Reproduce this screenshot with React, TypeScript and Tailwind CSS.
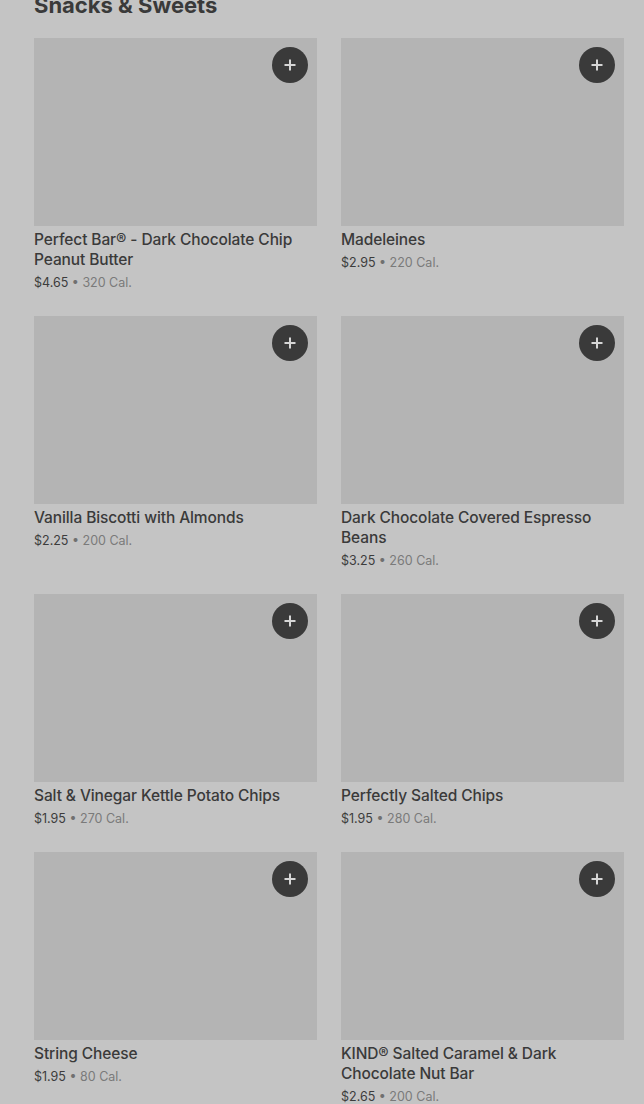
import React from "react";

type Item = { name: string; price: string; cal: string };

const items: Item[] = [
  { name: "Perfect Bar® - Dark Chocolate Chip Peanut Butter", price: "$4.65", cal: "320 Cal." },
  { name: "Madeleines", price: "$2.95", cal: "220 Cal." },
  { name: "Vanilla Biscotti with Almonds", price: "$2.25", cal: "200 Cal." },
  { name: "Dark Chocolate Covered Espresso Beans", price: "$3.25", cal: "260 Cal." },
  { name: "Salt & Vinegar Kettle Potato Chips", price: "$1.95", cal: "270 Cal." },
  { name: "Perfectly Salted Chips", price: "$1.95", cal: "280 Cal." },
  { name: "String Cheese", price: "$1.95", cal: "80 Cal." },
  { name: "KIND® Salted Caramel & Dark Chocolate Nut Bar", price: "$2.65", cal: "200 Cal." },
];

function Card({ item }: { item: Item }) {
  return (
    <div className="flex flex-col">
      <div className="relative h-[188px] bg-[#b4b4b4]">
        <button className="absolute right-[9px] top-[9px] flex h-[36px] w-[36px] items-center justify-center rounded-full bg-[#3a3a3a]">
          <svg width="14" height="14" viewBox="0 0 14 14">
            <path d="M7 1.5v11M1.5 7h11" stroke="#d6d6d6" strokeWidth="2" />
          </svg>
        </button>
      </div>
      <div className="mt-[4px] text-[15.5px] font-medium leading-[20px] tracking-[-0.1px] text-[#3a3a3a]">{item.name}</div>
      <div className="mt-[3px] text-[12.5px] leading-[20px]">
        <span className="text-[#3c3c3c]">{item.price}</span>
        <span className="text-[#707070]"> • </span>
        <span className="text-[#7a7a7a]">{item.cal}</span>
      </div>
    </div>
  );
}

export default function App() {
  return (
    <div
      className="h-[1104px] w-[644px] overflow-hidden bg-[#c4c4c4] pl-[34px] pr-[20px]"
      style={{ fontFamily: "Inter, 'Liberation Sans', sans-serif" }}
    >
      <h2 className="-mt-[9px] text-[22px] font-bold leading-[28px] text-[#3a3a3a]">Snacks &amp; Sweets</h2>
      <div className="mt-[19px] grid grid-cols-2 gap-x-[24px] gap-y-[23px]">
        {items.map((it) => (
          <Card key={it.name} item={it} />
        ))}
      </div>
    </div>
  );
}
